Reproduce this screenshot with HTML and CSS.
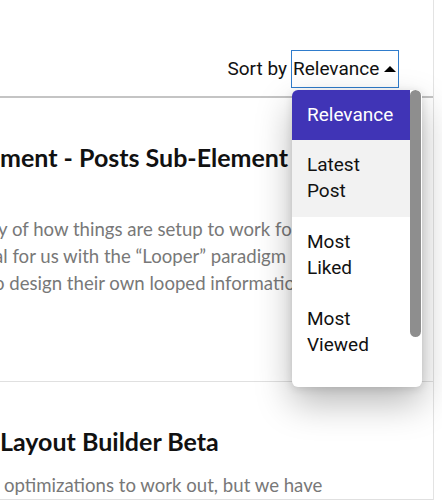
FILE: index.html
```html
<!DOCTYPE html>
<html lang="en">
<head>
<meta charset="utf-8">
<title>Posts</title>
<link rel="stylesheet" href="styles.css">
</head>
<body>
<main class="feed">
  <header class="toolbar">
    <span class="sort-label">Sort by</span>
    <div class="sort-select">
      <span class="sort-value">Relevance</span>
      <span class="caret"></span>
      <div class="sort-menu">
        <ul class="sort-options">
          <li class="option option--selected">Relevance</li>
          <li class="option option--hover">Latest<br>Post</li>
          <li class="option">Most<br>Liked</li>
          <li class="option">Most<br>Viewed</li>
        </ul>
        <div class="menu-scroll"><div class="menu-thumb"></div></div>
      </div>
    </div>
  </header>

  <article class="post">
    <h2 class="post-title">ment - Posts Sub-Element</h2>
    <p class="excerpt excerpt--spaced">
      <span class="line cut-y">y of how things are setup to work for</span>
      <span class="line cut-a">al for us with the “Looper” paradigm</span>
      <span class="line cut-o">o design their own looped information</span>
    </p>
  </article>

  <article class="post">
    <h2 class="post-title">Layout Builder Beta</h2>
    <p class="excerpt">
      <span class="line cut-space">optimizations to work out, but we have</span>
    </p>
  </article>
</main>
</body>
</html>
```

FILE: styles.css
```css
html, body {
  margin: 0;
  padding: 0;
  background: #ffffff;
}

body {
  overflow: hidden;
  height: 500px;
}

.feed {
  width: 433px;
  min-height: 500px;
  border-right: 1px solid #e3e3e3;
}

/* toolbar */
.toolbar {
  box-sizing: border-box;
  height: 98px;
  padding: 50px 34px 0 0;
  border-bottom: 2px solid #c4c4c4;
  display: flex;
  justify-content: flex-end;
  align-items: flex-start;
  gap: 4px;
  font-family: Roboto, "Liberation Sans", sans-serif;
  font-size: 19px;
  color: #111111;
}

.sort-label {
  line-height: 38px;
}

.sort-select {
  position: relative;
  box-sizing: border-box;
  height: 38px;
  width: 108px;
  border: 1px solid #2f7ccc;
  padding: 0 1px;
  display: flex;
  align-items: center;
  gap: 5px;
}

.sort-value {
  line-height: 36px;
}

.caret {
  width: 0;
  height: 0;
  border-left: 6px solid transparent;
  border-right: 6px solid transparent;
  border-bottom: 6px solid #000000;
  margin-top: -1px;
}

/* dropdown */
.sort-menu {
  position: absolute;
  left: 0;
  top: 39px;
  width: 130px;
  height: 297px;
  border-radius: 6px;
  overflow: hidden;
  background: #ffffff;
  box-shadow: 0 16px 36px rgba(0, 0, 0, 0.28), 0 2px 8px rgba(0, 0, 0, 0.12);
  display: flex;
  z-index: 10;
}

.sort-options {
  list-style: none;
  margin: 0;
  padding: 0;
  flex: 1;
}

.option {
  padding: 12px 10px 12px 15px;
  line-height: 26px;
  color: #111111;
}

.option + .option {
  padding-bottom: 13px;
}

.option--selected {
  background: #4034b6;
  color: #ffffff;
}

.option--hover {
  background: #f2f2f2;
}

.menu-scroll {
  width: 11px;
  padding-right: 1px;
}

.menu-thumb {
  height: 247px;
  border-radius: 6px;
  background: #8e8e8e;
}

/* posts */
.post {
  padding: 43px 0 0 0;
  border-bottom: 1px solid #e0e0e0;
  font-family: Lato, "Liberation Sans", sans-serif;
  white-space: nowrap;
}

.post:first-of-type {
  height: 240px;
}

.post-title {
  margin: 0;
  font-size: 25px;
  line-height: 32px;
  font-weight: 700;
  color: #111111;
}

.excerpt {
  margin: 15px 0 0 0;
  font-size: 18.6px;
  line-height: 27px;
  color: #787878;
}

.excerpt--spaced {
  margin-top: 43px;
}

.line {
  display: block;
}

.cut-y {
  margin-left: -2px;
}

.cut-a {
  margin-left: -6px;
}

.cut-o {
  margin-left: -6px;
}

.cut-space {
  margin-left: 4px;
}
```
